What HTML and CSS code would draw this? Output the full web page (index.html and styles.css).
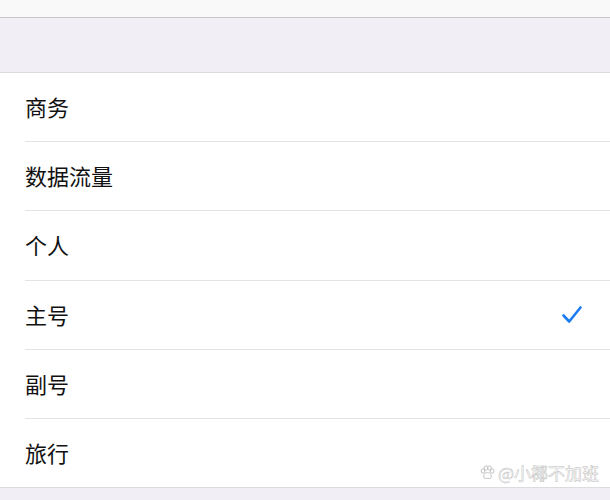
FILE: index.html
```html
<!DOCTYPE html>
<html lang="zh-CN">
<head>
    <meta charset="UTF-8">
    <meta name="viewport" content="width=device-width, initial-scale=1.0">
    <title>蜂窝号码标签</title>
    <link rel="stylesheet" href="styles.css">
</head>
<body>
    <div class="topbar"></div>
    <div class="band"></div>
    <div class="list">
        <div class="row"><div class="row-inner"><span class="label">商务</span></div></div>
        <div class="row"><div class="row-inner"><span class="label">数据流量</span></div></div>
        <div class="row tall"><div class="row-inner"><span class="label">个人</span></div></div>
        <div class="row"><div class="row-inner"><span class="label">主号</span>
            <svg class="check" width="22" height="20" viewBox="0 0 22 20">
                <path d="M2.5 10.5 L8.2 16.5 L19.5 2.5" fill="none" stroke="#1a7bf2" stroke-width="2.6" stroke-linecap="round" stroke-linejoin="round"/>
            </svg>
        </div></div>
        <div class="row"><div class="row-inner"><span class="label">副号</span></div></div>
        <div class="row last"><div class="row-inner"><span class="label">旅行</span></div></div>
        <div class="watermark">
            <svg width="15" height="15" viewBox="0 0 15 15">
                <g fill="#fff" stroke="#c0c0c0" stroke-width="1">
                    <ellipse cx="3" cy="6" rx="1.8" ry="2.2"/>
                    <ellipse cx="6" cy="3" rx="1.8" ry="2.2"/>
                    <ellipse cx="9.5" cy="3" rx="1.8" ry="2.2"/>
                    <ellipse cx="12.2" cy="6" rx="1.8" ry="2.2"/>
                    <path d="M7.5 7.5 C4.5 7.5 3 11 4 12.8 C5 14.2 6.5 13.2 7.5 13.2 C8.5 13.2 10 14.2 11 12.8 C12 11 10.5 7.5 7.5 7.5 Z"/>
                </g>
            </svg>
            <span>@小椰不加班</span>
        </div>
    </div>
    <div class="band bottom"></div>
</body>
</html>
```

FILE: styles.css
```css
body {
    margin: 0;
    background-color: #ffffff;
    font-family: "Noto Sans CJK SC", "Noto Sans", sans-serif;
    color: #111111;
}
.topbar {
    height: 17px;
    background-color: #f9f9f9;
    border-bottom: 1px solid #c9c8cc;
}
.band {
    height: 54px;
    background-color: #f1eff5;
    border-bottom: 1px solid #dddbe0;
}
.band.bottom {
    height: 12px;
    border-bottom: none;
}
.list {
    position: relative;
    background-color: #ffffff;
    border-bottom: 1px solid #dddbe0;
}
.row {
    padding-left: 25px;
}
.row-inner {
    height: 68px;
    display: flex;
    align-items: center;
    justify-content: space-between;
    padding-right: 27px;
    font-size: 22px;
    border-bottom: 1px solid #e3e2e6;
}
.label {
    margin-top: -3px;
}
.row.tall .row-inner {
    height: 69px;
}
.row.last .row-inner {
    border-bottom: none;
}
.check {
    display: block;
}
.watermark {
    position: absolute;
    right: 11px;
    bottom: 2px;
    display: flex;
    align-items: center;
    gap: 3px;
    font-size: 17px;
    color: #ffffff;
    -webkit-text-stroke: 0.5px #bdbdbd;
}
```
